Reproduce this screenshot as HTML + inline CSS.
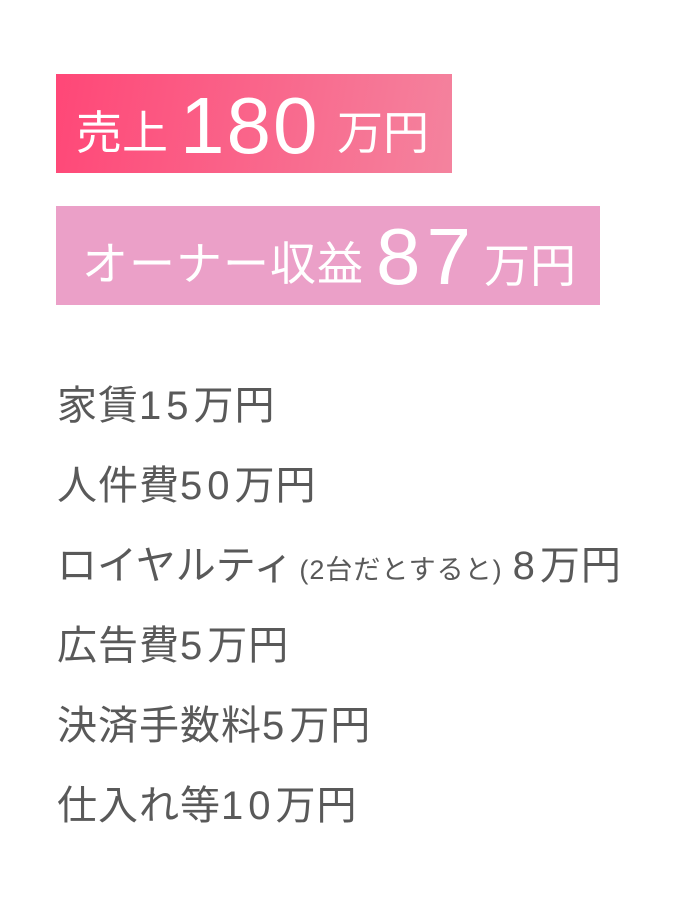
<!DOCTYPE html>
<html><head><meta charset="utf-8"><style>
body{margin:0;width:682px;height:914px;background:#fff;font-family:"Liberation Sans","Noto Sans CJK JP",sans-serif;position:relative;overflow:hidden}
.box{position:absolute;left:56px;color:#fff;white-space:nowrap}
.b1{top:74px;width:396px;height:99px;background:linear-gradient(100deg,#ff4777,#f4839e)}
.b2{top:206px;width:544px;height:99px;background:#eba0c8}
.t{position:absolute;white-space:nowrap;line-height:1}
.sm{font-size:46px}
.big{font-size:80px}
.list{position:absolute;left:57px;color:#595959;font-size:40px;letter-spacing:1px;line-height:1;white-space:nowrap}
.d{letter-spacing:5px}
.s{font-size:27px;letter-spacing:1px;margin-left:6px;margin-right:10px}
</style></head><body>
<div class="box b1">
 <span class="t sm" style="left:20px;top:36px">売上</span>
 <span class="t big" style="left:124px;top:12px;letter-spacing:2px">180</span>
 <span class="t sm" style="left:281px;top:36px">万円</span>
</div>
<div class="box b2">
 <span class="t sm" style="left:26px;top:35px;letter-spacing:1px">オーナー収益</span>
 <span class="t big" style="left:320px;top:11px;letter-spacing:6px">87</span>
 <span class="t sm" style="left:428px;top:37px">万円</span>
</div>
<div class="list" style="top:386px">家賃<span class="d">15</span>万円</div>
<div class="list" style="top:466px">人件費<span class="d">50</span>万円</div>
<div class="list" style="top:546px"><span style="letter-spacing:0">ロイヤルティ</span><span class="s">(2台だとすると)</span><span class="d">8</span>万円</div>
<div class="list" style="top:626px">広告費<span class="d">5</span>万円</div>
<div class="list" style="top:706px">決済手数料<span class="d">5</span>万円</div>
<div class="list" style="top:786px">仕入れ等<span class="d">10</span>万円</div>
</body></html>
